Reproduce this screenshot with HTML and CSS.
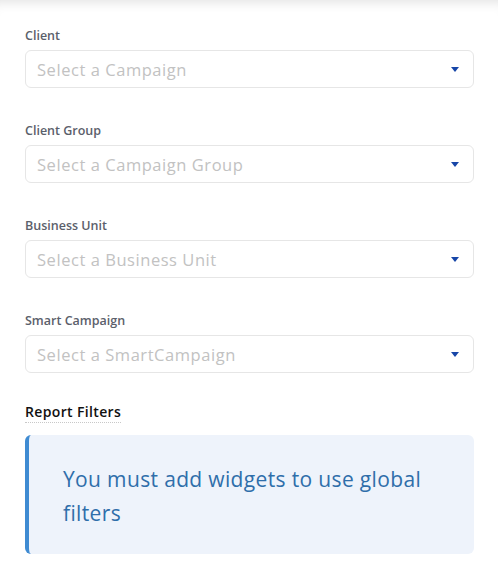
FILE: index.html
```html
<!DOCTYPE html>
<html lang="en">
<head>
  <title>Report Settings</title>
  <meta charset="utf-8"/>
  <link rel="stylesheet" href="styles.css">
</head>
<body>
  <div class="panel">
    <div class="field">
      <label class="field-label" for="client">Client</label>
      <div class="select" id="client">
        <span class="placeholder">Select a Campaign</span>
        <span class="caret"></span>
      </div>
    </div>

    <div class="field">
      <label class="field-label" for="client-group">Client Group</label>
      <div class="select" id="client-group">
        <span class="placeholder">Select a Campaign Group</span>
        <span class="caret"></span>
      </div>
    </div>

    <div class="field">
      <label class="field-label" for="business-unit">Business Unit</label>
      <div class="select" id="business-unit">
        <span class="placeholder">Select a Business Unit</span>
        <span class="caret"></span>
      </div>
    </div>

    <div class="field">
      <label class="field-label" for="smart-campaign">Smart Campaign</label>
      <div class="select" id="smart-campaign">
        <span class="placeholder">Select a SmartCampaign</span>
        <span class="caret"></span>
      </div>
    </div>

    <div class="section-title"><span>Report Filters</span></div>

    <div class="notice">
      You must add widgets to use global filters
    </div>
  </div>
</body>
</html>
```

FILE: styles.css
```css
    body {
      margin: 0;
      background: #fff;
      font-family: "Open Sans", "Lato", sans-serif;
    }

    .panel {
      padding: 26px 24px 32px 25px;
      box-shadow: inset 0 12px 12px -10px rgba(0, 0, 0, 0.12);
      min-height: 587px;
      box-sizing: border-box;
    }

    .field {
      margin-bottom: 33px;
    }

    .field-label {
      display: block;
      font-size: 12.5px;
      font-weight: 600;
      color: #5b606b;
      line-height: 19px;
      margin-bottom: 5px;
    }

    .select {
      display: flex;
      align-items: center;
      justify-content: space-between;
      height: 38px;
      box-sizing: border-box;
      border: 1px solid #e6e6e6;
      border-radius: 6px;
      padding: 0 14px 0 11px;
    }

    .placeholder {
      font-size: 16.5px;
      letter-spacing: 0.55px;
      color: #c2c2c2;
    }

    .caret {
      width: 0;
      height: 0;
      border-left: 4px solid transparent;
      border-right: 4px solid transparent;
      border-top: 5px solid #1746a8;
    }

    .section-title {
      margin-top: -6px;
      margin-bottom: 12px;
    }

    .section-title span {
      display: inline-block;
      font-size: 14px;
      font-weight: 600;
      letter-spacing: 0.35px;
      color: #111;
      line-height: 18px;
      padding-bottom: 1px;
      border-bottom: 1px dotted #c8c8c8;
    }

    .notice {
      background: #eef3fb;
      border-left: 4px solid #3f8bd2;
      border-radius: 6px;
      padding: 27px 40px 24px 34px;
      font-size: 21px;
      letter-spacing: 0.35px;
      line-height: 34px;
      color: #2f6eaa;
    }
```
